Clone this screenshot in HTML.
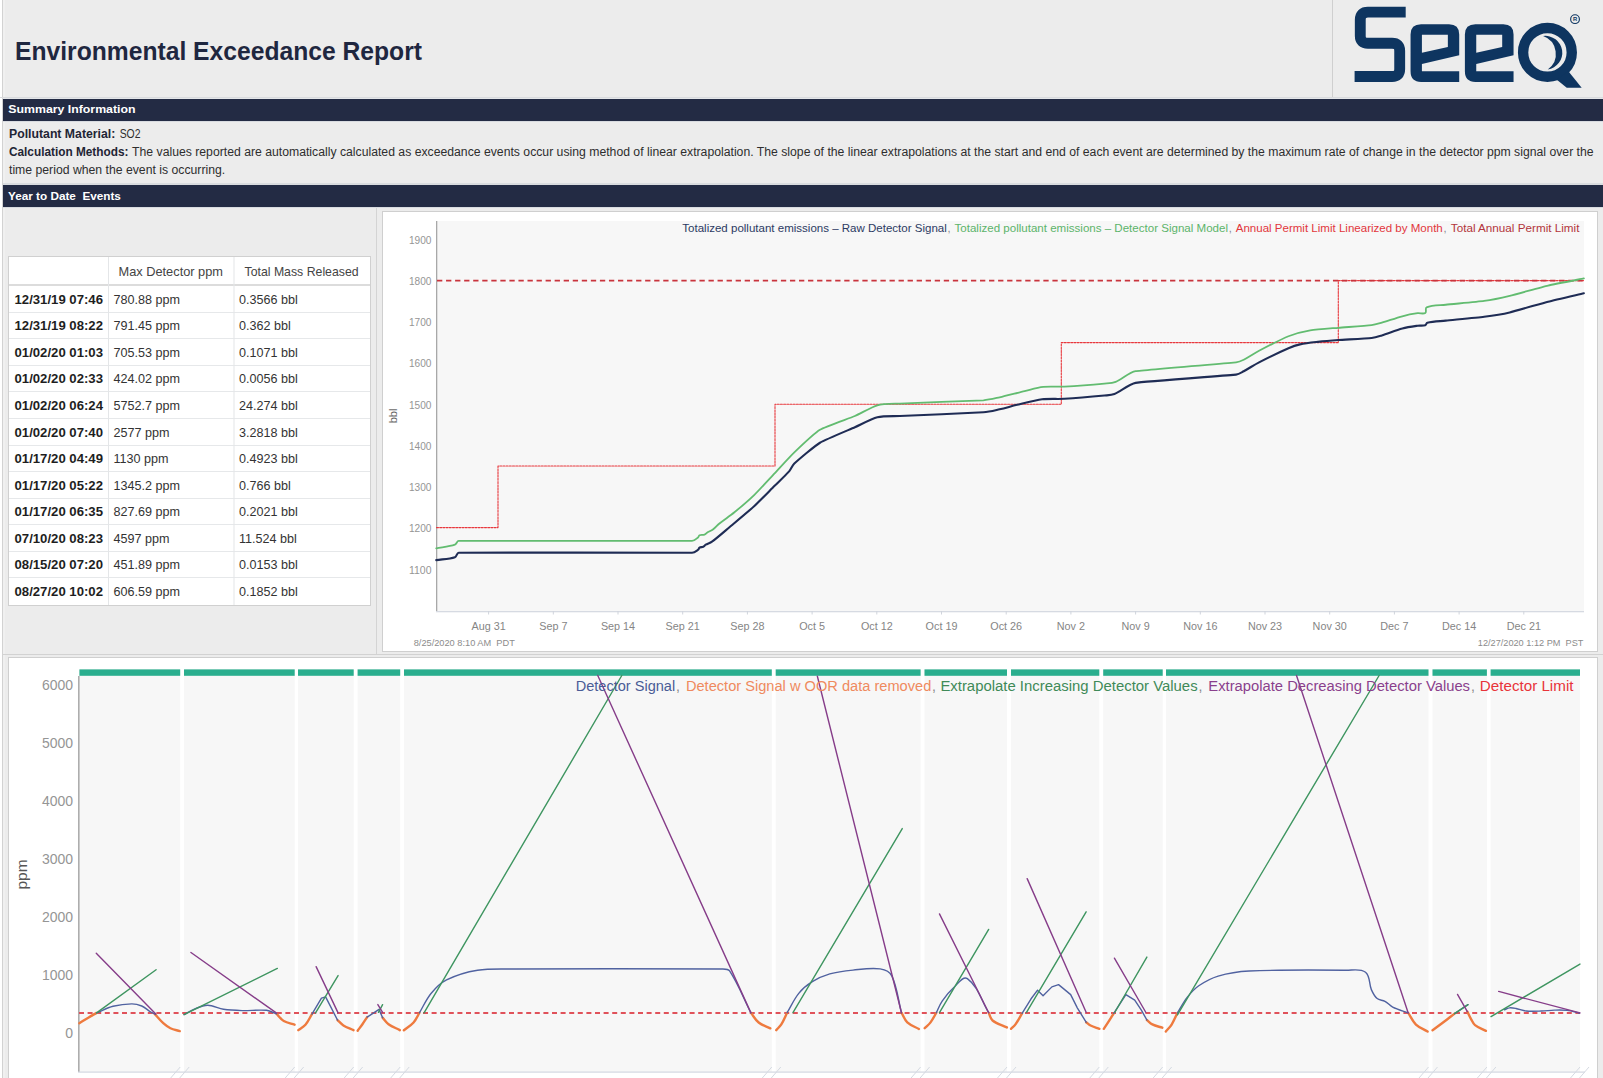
<!DOCTYPE html><html><head><meta charset="utf-8"><style>html,body{margin:0;padding:0;background:#ececec;overflow:hidden;width:1603px;height:1078px}svg{display:block}text{font-family:"Liberation Sans",sans-serif}</style></head><body>
<svg width="1603" height="1078" viewBox="0 0 1603 1078">
<rect x="0" y="0" width="1603" height="1078" fill="#ececec" />
<rect x="0" y="0" width="2" height="1078" fill="#ffffff" />
<rect x="2" y="0" width="1" height="1078" fill="#d2d2d2" />
<rect x="3" y="0" width="2" height="1078" fill="#f0f0f0" />
<rect x="1332" y="0" width="1" height="97" fill="#cfcfcf" />
<rect x="0" y="97" width="1603" height="1" fill="#d9dbde" />
<rect x="3" y="98" width="1600" height="1" fill="#e4e6e9" />
<text x="15.00" y="60.00" font-size="25" fill="#1f2740" font-weight="bold" textLength="407.00" lengthAdjust="spacingAndGlyphs" >Environmental Exceedance Report</text>
<g transform="translate(1340,0) scale(0.162196)" fill="#0e3560">
<path d="M405,75 H172 Q125,75 125,122 V220 Q125,267 172,267 H321 Q368,267 368,314 V425 Q368,472 321,472 H90" fill="none" stroke="#0e3560" stroke-width="67"/>
<path fill-rule="evenodd" d="M500,150 H672 Q735,150 735,213 V340 L505,395 V440 H735 V505 H500 Q435,505 435,440 V213 Q435,150 500,150 Z M505,215 H665 V290 L505,325 Z"/>
<path fill-rule="evenodd" d="M835,150 H1007 Q1070,150 1070,213 V340 L840,395 V440 H1070 V505 H835 Q770,505 770,440 V213 Q770,150 835,150 Z M840,215 H1000 V290 L840,325 Z"/>
<circle cx="1279" cy="323" r="150" fill="none" stroke="#0e3560" stroke-width="64"/>
<path d="M1252,222 A104,104 0 0 1 1281,428 A117,117 0 0 0 1252,222 Z"/>
<path d="M1335,490 L1408,440 L1490,541 L1398,541 Z"/>
<circle cx="1449" cy="118" r="27" fill="none" stroke="#0e3560" stroke-width="7"/>
<text x="1449" y="131" font-size="36" font-weight="bold" text-anchor="middle" fill="#0e3560">R</text>
</g>
<rect x="3" y="99" width="1600" height="22" fill="#232b44" />
<rect x="3" y="121" width="1600" height="1" fill="#d8dbe0" />
<text x="8.30" y="113.40" font-size="11.5" fill="#ffffff" font-weight="bold" textLength="127.20" lengthAdjust="spacingAndGlyphs" >Summary Information</text>
<rect x="3" y="183" width="1600" height="2" fill="#d9dcdf" />
<rect x="3" y="185" width="1600" height="22" fill="#232b44" />
<rect x="3" y="207" width="1600" height="1" fill="#d8dbe0" />
<text x="8.00" y="199.70" font-size="11.5" fill="#ffffff" font-weight="bold" textLength="112.90" lengthAdjust="spacingAndGlyphs" xml:space="preserve">Year to Date  Events</text>
<text x="9.00" y="137.60" font-size="12" fill="#1f2535" font-weight="bold" textLength="106.30" lengthAdjust="spacingAndGlyphs" >Pollutant Material:</text>
<text x="119.70" y="137.60" font-size="12" fill="#2e2e2e" textLength="20.80" lengthAdjust="spacingAndGlyphs" >SO2</text>
<text x="9.00" y="156.30" font-size="12" fill="#1f2535" font-weight="bold" textLength="119.40" lengthAdjust="spacingAndGlyphs" >Calculation Methods:</text>
<text x="132.10" y="156.30" font-size="12" fill="#2e2e2e" textLength="1461.50" lengthAdjust="spacingAndGlyphs" >The values reported are automatically calculated as exceedance events occur using method of linear extrapolation. The slope of the linear extrapolations at the start and end of each event are determined by the maximum rate of change in the detector ppm signal over the</text>
<text x="9.00" y="174.00" font-size="12" fill="#2e2e2e" textLength="216.20" lengthAdjust="spacingAndGlyphs" >time period when the event is occurring.</text>
<rect x="376" y="208" width="1" height="446" fill="#d4d4d4" />
<rect x="9" y="257" width="361" height="348" fill="#ffffff" />
<rect x="8.5" y="256.5" width="362" height="349" fill="none" stroke="#d0d0d0" stroke-width="1"/>
<rect x="9" y="284" width="361" height="2" fill="#dcdcdc" />
<rect x="9" y="312" width="361" height="1" fill="#e6e8ea" />
<rect x="9" y="338" width="361" height="1" fill="#e6e8ea" />
<rect x="9" y="365" width="361" height="1" fill="#e6e8ea" />
<rect x="9" y="391" width="361" height="1" fill="#e6e8ea" />
<rect x="9" y="418" width="361" height="1" fill="#e6e8ea" />
<rect x="9" y="445" width="361" height="1" fill="#e6e8ea" />
<rect x="9" y="471" width="361" height="1" fill="#e6e8ea" />
<rect x="9" y="498" width="361" height="1" fill="#e6e8ea" />
<rect x="9" y="524" width="361" height="1" fill="#e6e8ea" />
<rect x="9" y="551" width="361" height="1" fill="#e6e8ea" />
<rect x="9" y="577" width="361" height="1" fill="#e6e8ea" />
<rect x="108" y="257" width="1" height="348" fill="#e4e6e8" />
<rect x="233.5" y="257" width="1" height="348" fill="#e4e6e8" />
<text x="118.50" y="276.20" font-size="13" fill="#444444" textLength="104.50" lengthAdjust="spacingAndGlyphs" >Max Detector ppm</text>
<text x="244.50" y="276.20" font-size="13" fill="#444444" textLength="114.10" lengthAdjust="spacingAndGlyphs" >Total Mass Released</text>
<text x="14.50" y="303.60" font-size="13" fill="#1e1e1e" font-weight="bold" textLength="88.50" lengthAdjust="spacingAndGlyphs" >12/31/19 07:46</text>
<text x="113.50" y="303.60" font-size="13" fill="#333333" textLength="66.50" lengthAdjust="spacingAndGlyphs" >780.88 ppm</text>
<text x="239.00" y="303.60" font-size="13" fill="#333333" textLength="58.70" lengthAdjust="spacingAndGlyphs" >0.3566 bbl</text>
<text x="14.50" y="330.18" font-size="13" fill="#1e1e1e" font-weight="bold" textLength="88.50" lengthAdjust="spacingAndGlyphs" >12/31/19 08:22</text>
<text x="113.50" y="330.18" font-size="13" fill="#333333" textLength="66.50" lengthAdjust="spacingAndGlyphs" >791.45 ppm</text>
<text x="239.00" y="330.18" font-size="13" fill="#333333" textLength="51.71" lengthAdjust="spacingAndGlyphs" >0.362 bbl</text>
<text x="14.50" y="356.77" font-size="13" fill="#1e1e1e" font-weight="bold" textLength="88.50" lengthAdjust="spacingAndGlyphs" >01/02/20 01:03</text>
<text x="113.50" y="356.77" font-size="13" fill="#333333" textLength="66.50" lengthAdjust="spacingAndGlyphs" >705.53 ppm</text>
<text x="239.00" y="356.77" font-size="13" fill="#333333" textLength="58.70" lengthAdjust="spacingAndGlyphs" >0.1071 bbl</text>
<text x="14.50" y="383.35" font-size="13" fill="#1e1e1e" font-weight="bold" textLength="88.50" lengthAdjust="spacingAndGlyphs" >01/02/20 02:33</text>
<text x="113.50" y="383.35" font-size="13" fill="#333333" textLength="66.50" lengthAdjust="spacingAndGlyphs" >424.02 ppm</text>
<text x="239.00" y="383.35" font-size="13" fill="#333333" textLength="58.70" lengthAdjust="spacingAndGlyphs" >0.0056 bbl</text>
<text x="14.50" y="409.93" font-size="13" fill="#1e1e1e" font-weight="bold" textLength="88.50" lengthAdjust="spacingAndGlyphs" >01/02/20 06:24</text>
<text x="113.50" y="409.93" font-size="13" fill="#333333" textLength="66.50" lengthAdjust="spacingAndGlyphs" >5752.7 ppm</text>
<text x="239.00" y="409.93" font-size="13" fill="#333333" textLength="58.70" lengthAdjust="spacingAndGlyphs" >24.274 bbl</text>
<text x="14.50" y="436.52" font-size="13" fill="#1e1e1e" font-weight="bold" textLength="88.50" lengthAdjust="spacingAndGlyphs" >01/02/20 07:40</text>
<text x="113.50" y="436.52" font-size="13" fill="#333333" textLength="56.00" lengthAdjust="spacingAndGlyphs" >2577 ppm</text>
<text x="239.00" y="436.52" font-size="13" fill="#333333" textLength="58.70" lengthAdjust="spacingAndGlyphs" >3.2818 bbl</text>
<text x="14.50" y="463.10" font-size="13" fill="#1e1e1e" font-weight="bold" textLength="88.50" lengthAdjust="spacingAndGlyphs" >01/17/20 04:49</text>
<text x="113.50" y="463.10" font-size="13" fill="#333333" textLength="55.07" lengthAdjust="spacingAndGlyphs" >1130 ppm</text>
<text x="239.00" y="463.10" font-size="13" fill="#333333" textLength="58.70" lengthAdjust="spacingAndGlyphs" >0.4923 bbl</text>
<text x="14.50" y="489.68" font-size="13" fill="#1e1e1e" font-weight="bold" textLength="88.50" lengthAdjust="spacingAndGlyphs" >01/17/20 05:22</text>
<text x="113.50" y="489.68" font-size="13" fill="#333333" textLength="66.50" lengthAdjust="spacingAndGlyphs" >1345.2 ppm</text>
<text x="239.00" y="489.68" font-size="13" fill="#333333" textLength="51.71" lengthAdjust="spacingAndGlyphs" >0.766 bbl</text>
<text x="14.50" y="516.27" font-size="13" fill="#1e1e1e" font-weight="bold" textLength="88.50" lengthAdjust="spacingAndGlyphs" >01/17/20 06:35</text>
<text x="113.50" y="516.27" font-size="13" fill="#333333" textLength="66.50" lengthAdjust="spacingAndGlyphs" >827.69 ppm</text>
<text x="239.00" y="516.27" font-size="13" fill="#333333" textLength="58.70" lengthAdjust="spacingAndGlyphs" >0.2021 bbl</text>
<text x="14.50" y="542.85" font-size="13" fill="#1e1e1e" font-weight="bold" textLength="88.50" lengthAdjust="spacingAndGlyphs" >07/10/20 08:23</text>
<text x="113.50" y="542.85" font-size="13" fill="#333333" textLength="56.00" lengthAdjust="spacingAndGlyphs" >4597 ppm</text>
<text x="239.00" y="542.85" font-size="13" fill="#333333" textLength="57.77" lengthAdjust="spacingAndGlyphs" >11.524 bbl</text>
<text x="14.50" y="569.43" font-size="13" fill="#1e1e1e" font-weight="bold" textLength="88.50" lengthAdjust="spacingAndGlyphs" >08/15/20 07:20</text>
<text x="113.50" y="569.43" font-size="13" fill="#333333" textLength="66.50" lengthAdjust="spacingAndGlyphs" >451.89 ppm</text>
<text x="239.00" y="569.43" font-size="13" fill="#333333" textLength="58.70" lengthAdjust="spacingAndGlyphs" >0.0153 bbl</text>
<text x="14.50" y="596.02" font-size="13" fill="#1e1e1e" font-weight="bold" textLength="88.50" lengthAdjust="spacingAndGlyphs" >08/27/20 10:02</text>
<text x="113.50" y="596.02" font-size="13" fill="#333333" textLength="66.50" lengthAdjust="spacingAndGlyphs" >606.59 ppm</text>
<text x="239.00" y="596.02" font-size="13" fill="#333333" textLength="58.70" lengthAdjust="spacingAndGlyphs" >0.1852 bbl</text>
<rect x="382.5" y="211.5" width="1215" height="440" fill="#ffffff" stroke="#cfcfcf" stroke-width="1"/>
<rect x="437" y="221" width="1147" height="390" fill="#f7f7f7" />
<rect x="436" y="221" width="1.3" height="391" fill="#a8a8a8" />
<rect x="436" y="611" width="1148" height="1.3" fill="#d6dae2" />
<rect x="488.1" y="611" width="1" height="3.5" fill="#d0d4dc" />
<rect x="552.8000000000001" y="611" width="1" height="3.5" fill="#d0d4dc" />
<rect x="617.5" y="611" width="1" height="3.5" fill="#d0d4dc" />
<rect x="682.2" y="611" width="1" height="3.5" fill="#d0d4dc" />
<rect x="746.9000000000001" y="611" width="1" height="3.5" fill="#d0d4dc" />
<rect x="811.6" y="611" width="1" height="3.5" fill="#d0d4dc" />
<rect x="876.3000000000001" y="611" width="1" height="3.5" fill="#d0d4dc" />
<rect x="941.0" y="611" width="1" height="3.5" fill="#d0d4dc" />
<rect x="1005.7" y="611" width="1" height="3.5" fill="#d0d4dc" />
<rect x="1070.4" y="611" width="1" height="3.5" fill="#d0d4dc" />
<rect x="1135.1" y="611" width="1" height="3.5" fill="#d0d4dc" />
<rect x="1199.8000000000002" y="611" width="1" height="3.5" fill="#d0d4dc" />
<rect x="1264.5" y="611" width="1" height="3.5" fill="#d0d4dc" />
<rect x="1329.2" y="611" width="1" height="3.5" fill="#d0d4dc" />
<rect x="1393.9" y="611" width="1" height="3.5" fill="#d0d4dc" />
<rect x="1458.6" y="611" width="1" height="3.5" fill="#d0d4dc" />
<rect x="1523.3000000000002" y="611" width="1" height="3.5" fill="#d0d4dc" />
<text x="488.60" y="629.60" font-size="11" fill="#858585" text-anchor="middle" textLength="34.20" lengthAdjust="spacingAndGlyphs" >Aug 31</text>
<text x="553.30" y="629.60" font-size="11" fill="#858585" text-anchor="middle" textLength="28.20" lengthAdjust="spacingAndGlyphs" >Sep 7</text>
<text x="618.00" y="629.60" font-size="11" fill="#858585" text-anchor="middle" textLength="34.20" lengthAdjust="spacingAndGlyphs" >Sep 14</text>
<text x="682.70" y="629.60" font-size="11" fill="#858585" text-anchor="middle" textLength="34.20" lengthAdjust="spacingAndGlyphs" >Sep 21</text>
<text x="747.40" y="629.60" font-size="11" fill="#858585" text-anchor="middle" textLength="34.20" lengthAdjust="spacingAndGlyphs" >Sep 28</text>
<text x="812.10" y="629.60" font-size="11" fill="#858585" text-anchor="middle" textLength="25.79" lengthAdjust="spacingAndGlyphs" >Oct 5</text>
<text x="876.80" y="629.60" font-size="11" fill="#858585" text-anchor="middle" textLength="31.79" lengthAdjust="spacingAndGlyphs" >Oct 12</text>
<text x="941.50" y="629.60" font-size="11" fill="#858585" text-anchor="middle" textLength="31.79" lengthAdjust="spacingAndGlyphs" >Oct 19</text>
<text x="1006.20" y="629.60" font-size="11" fill="#858585" text-anchor="middle" textLength="31.79" lengthAdjust="spacingAndGlyphs" >Oct 26</text>
<text x="1070.90" y="629.60" font-size="11" fill="#858585" text-anchor="middle" textLength="28.19" lengthAdjust="spacingAndGlyphs" >Nov 2</text>
<text x="1135.60" y="629.60" font-size="11" fill="#858585" text-anchor="middle" textLength="28.19" lengthAdjust="spacingAndGlyphs" >Nov 9</text>
<text x="1200.30" y="629.60" font-size="11" fill="#858585" text-anchor="middle" textLength="34.19" lengthAdjust="spacingAndGlyphs" >Nov 16</text>
<text x="1265.00" y="629.60" font-size="11" fill="#858585" text-anchor="middle" textLength="34.19" lengthAdjust="spacingAndGlyphs" >Nov 23</text>
<text x="1329.70" y="629.60" font-size="11" fill="#858585" text-anchor="middle" textLength="34.19" lengthAdjust="spacingAndGlyphs" >Nov 30</text>
<text x="1394.40" y="629.60" font-size="11" fill="#858585" text-anchor="middle" textLength="28.19" lengthAdjust="spacingAndGlyphs" >Dec 7</text>
<text x="1459.10" y="629.60" font-size="11" fill="#858585" text-anchor="middle" textLength="34.19" lengthAdjust="spacingAndGlyphs" >Dec 14</text>
<text x="1523.80" y="629.60" font-size="11" fill="#858585" text-anchor="middle" textLength="34.19" lengthAdjust="spacingAndGlyphs" >Dec 21</text>
<text x="431.50" y="243.70" font-size="10" fill="#959595" text-anchor="end" textLength="22.50" lengthAdjust="spacingAndGlyphs" >1900</text>
<text x="431.50" y="284.95" font-size="10" fill="#959595" text-anchor="end" textLength="22.50" lengthAdjust="spacingAndGlyphs" >1800</text>
<text x="431.50" y="326.20" font-size="10" fill="#959595" text-anchor="end" textLength="22.50" lengthAdjust="spacingAndGlyphs" >1700</text>
<text x="431.50" y="367.45" font-size="10" fill="#959595" text-anchor="end" textLength="22.50" lengthAdjust="spacingAndGlyphs" >1600</text>
<text x="431.50" y="408.70" font-size="10" fill="#959595" text-anchor="end" textLength="22.50" lengthAdjust="spacingAndGlyphs" >1500</text>
<text x="431.50" y="449.95" font-size="10" fill="#959595" text-anchor="end" textLength="22.50" lengthAdjust="spacingAndGlyphs" >1400</text>
<text x="431.50" y="491.20" font-size="10" fill="#959595" text-anchor="end" textLength="22.50" lengthAdjust="spacingAndGlyphs" >1300</text>
<text x="431.50" y="532.45" font-size="10" fill="#959595" text-anchor="end" textLength="22.50" lengthAdjust="spacingAndGlyphs" >1200</text>
<text x="431.50" y="573.70" font-size="10" fill="#959595" text-anchor="end" textLength="22.50" lengthAdjust="spacingAndGlyphs" >1100</text>
<text x="0" y="0" font-size="11" fill="#666" transform="translate(397,416) rotate(-90)" text-anchor="middle">bbl</text>
<text x="413.70" y="645.50" font-size="9.5" fill="#8c8c8c" textLength="101.10" lengthAdjust="spacingAndGlyphs" xml:space="preserve">8/25/2020 8:10 AM  PDT</text>
<text x="1477.80" y="645.50" font-size="9.5" fill="#8c8c8c" textLength="105.60" lengthAdjust="spacingAndGlyphs" xml:space="preserve">12/27/2020 1:12 PM  PST</text>
<text x="682.30" y="232.20" font-size="11" fill="#2c3a63" textLength="264.50" lengthAdjust="spacingAndGlyphs" >Totalized pollutant emissions – Raw Detector Signal</text>
<text x="947.50" y="232.20" font-size="11" fill="#888888" >,</text>
<text x="954.50" y="232.20" font-size="11" fill="#5cb46a" textLength="273.50" lengthAdjust="spacingAndGlyphs" >Totalized pollutant emissions – Detector Signal Model</text>
<text x="1228.80" y="232.20" font-size="11" fill="#888888" >,</text>
<text x="1235.70" y="232.20" font-size="11" fill="#e2363c" textLength="207.10" lengthAdjust="spacingAndGlyphs" >Annual Permit Limit Linearized by Month</text>
<text x="1443.50" y="232.20" font-size="11" fill="#888888" >,</text>
<text x="1450.80" y="232.20" font-size="11" fill="#b3353b" textLength="128.60" lengthAdjust="spacingAndGlyphs" >Total Annual Permit Limit</text>
<path d="M436.50,527.60 L498.00,527.60 L498.00,466.00 L775.00,466.00 L775.00,404.30 L1061.30,404.30 L1061.30,342.60 L1338.30,342.60 L1338.30,280.60 L1584.00,280.60" fill="none" stroke="#e8383d" stroke-width="1.1" stroke-linejoin="round" stroke-linecap="round" stroke-dasharray="2,1.2" stroke-linecap="butt" stroke-linejoin="miter"/>
<line x1="437" y1="280.6" x2="1584" y2="280.6" stroke="#c9343d" stroke-width="1.8" stroke-dasharray="5.3,3.75"/>
<path d="M436.24,548.43 C442.12,547.26 449.26,546.59 454.95,544.69 C456.63,544.13 456.93,540.98 458.70,540.95 C464.70,540.85 686.01,541.04 692.01,540.95 C694.43,540.91 696.32,538.68 698.25,537.21 C698.87,536.73 698.77,535.50 699.49,535.21 C701.05,534.59 702.90,535.24 704.49,534.71 C705.50,534.37 706.08,533.28 706.98,532.71 C709.00,531.45 711.30,530.64 713.22,529.22 C715.49,527.54 717.25,525.25 719.46,523.48 C724.14,519.73 729.79,516.06 734.43,512.25 C739.07,508.44 750.08,498.96 754.39,494.78 C758.70,490.61 770.24,477.94 774.35,473.57 C778.47,469.21 789.99,456.52 794.32,452.36 C798.64,448.21 814.82,432.84 819.96,429.76 C825.11,426.67 849.38,418.38 854.90,416.03 C860.42,413.68 871.57,406.91 877.35,405.30 C883.14,403.70 893.82,403.84 899.81,403.56 C905.81,403.27 977.42,400.69 983.41,400.31 C988.89,399.97 994.26,398.52 999.63,397.32 C1005.48,396.00 1018.74,392.48 1024.58,391.08 C1030.41,389.68 1037.33,387.51 1043.29,386.84 C1049.26,386.17 1058.51,386.91 1064.50,386.59 C1070.50,386.27 1098.45,384.15 1104.43,383.59 C1108.20,383.24 1112.14,383.25 1115.66,381.85 C1121.23,379.62 1129.70,372.08 1135.62,371.12 C1141.54,370.16 1230.07,362.94 1236.04,362.31 C1238.72,362.03 1241.30,360.96 1243.71,359.75 C1249.01,357.10 1253.82,353.55 1259.06,350.80 C1264.37,348.01 1282.90,338.45 1288.47,336.22 C1294.04,333.99 1304.30,331.34 1310.21,330.34 C1316.13,329.34 1332.37,328.28 1338.35,327.78 C1344.33,327.28 1365.64,325.92 1371.60,325.22 C1375.09,324.81 1378.45,323.65 1381.83,322.66 C1387.59,320.98 1396.49,317.80 1402.29,316.27 C1407.33,314.94 1412.47,313.95 1417.64,313.20 C1420.17,312.83 1423.17,314.35 1425.31,312.94 C1426.92,311.89 1424.80,308.03 1426.59,307.32 C1432.16,305.09 1439.81,305.42 1445.77,304.76 C1451.73,304.10 1478.19,301.76 1484.14,300.92 C1490.08,300.09 1503.88,297.21 1509.71,295.81 C1515.55,294.41 1542.24,286.95 1548.08,285.58 C1553.92,284.21 1578.00,279.59 1583.89,278.42" fill="none" stroke="#62bc70" stroke-width="1.8" stroke-linejoin="round" stroke-linecap="round" />
<path d="M436.24,560.16 C442.16,559.21 449.26,559.07 454.95,557.17 C456.80,556.55 456.75,552.71 458.70,552.68 C464.70,552.56 686.01,552.75 692.01,552.68 C694.32,552.65 696.33,550.96 698.25,549.68 C698.90,549.25 698.82,548.09 699.49,547.69 C700.60,547.02 702.07,547.25 703.24,546.69 C704.20,546.23 704.81,545.22 705.73,544.69 C707.74,543.55 710.11,543.07 711.97,541.70 C716.80,538.14 724.85,531.09 729.44,527.22 C734.03,523.36 749.97,510.07 754.39,506.01 C758.81,501.96 770.11,490.29 774.35,486.05 C778.60,481.81 785.34,475.56 789.33,471.08 C791.32,468.84 792.12,465.63 794.32,463.59 C798.72,459.52 814.82,445.82 819.96,442.73 C825.11,439.65 849.41,429.69 854.90,427.26 C860.38,424.83 871.53,418.74 877.35,417.28 C883.18,415.82 893.82,416.31 899.81,416.03 C905.81,415.75 977.42,412.69 983.41,412.29 C988.89,411.92 994.26,410.49 999.63,409.30 C1005.48,407.99 1011.25,406.18 1017.09,404.80 C1022.93,403.43 1036.09,400.07 1042.05,399.31 C1048.00,398.56 1058.51,399.17 1064.50,398.81 C1070.49,398.46 1098.46,396.14 1104.43,395.57 C1107.78,395.25 1111.30,395.34 1114.41,394.07 C1119.97,391.81 1129.70,383.79 1135.62,382.84 C1141.55,381.90 1230.07,375.22 1236.04,374.59 C1238.81,374.29 1241.25,372.57 1243.71,371.26 C1248.94,368.47 1253.79,365.02 1259.06,362.31 C1264.39,359.56 1282.97,350.65 1288.47,348.24 C1292.18,346.62 1296.03,345.26 1299.98,344.40 C1305.84,343.13 1311.92,342.52 1317.89,341.85 C1323.85,341.17 1332.36,340.48 1338.35,340.06 C1344.33,339.63 1365.63,338.64 1371.60,338.01 C1375.09,337.64 1378.47,336.49 1381.83,335.45 C1387.56,333.68 1396.50,330.12 1402.29,328.55 C1407.31,327.18 1412.49,326.48 1417.64,325.73 C1420.17,325.37 1422.86,325.99 1425.31,325.22 C1426.35,324.89 1426.29,322.90 1427.35,322.66 C1433.21,321.35 1439.80,321.24 1445.77,320.62 C1451.74,320.00 1478.18,317.54 1484.14,316.78 C1490.09,316.02 1503.87,313.81 1509.71,312.43 C1515.55,311.05 1542.27,303.19 1548.08,301.69 C1553.89,300.19 1578.05,294.63 1583.89,293.25" fill="none" stroke="#1f2c55" stroke-width="2.1" stroke-linejoin="round" stroke-linecap="round" />
<rect x="3" y="654" width="1600" height="1" fill="#d2d2d2" />
<rect x="8.5" y="657.5" width="1589" height="440" fill="#ffffff" stroke="#cfcfcf" stroke-width="1"/>
<rect x="79.40" y="669" width="100.80" height="403" fill="#f7f7f7" />
<rect x="184.00" y="669" width="110.70" height="403" fill="#f7f7f7" />
<rect x="298.00" y="669" width="55.70" height="403" fill="#f7f7f7" />
<rect x="357.60" y="669" width="42.60" height="403" fill="#f7f7f7" />
<rect x="404.00" y="669" width="367.80" height="403" fill="#f7f7f7" />
<rect x="775.70" y="669" width="144.90" height="403" fill="#f7f7f7" />
<rect x="924.50" y="669" width="82.50" height="403" fill="#f7f7f7" />
<rect x="1011.00" y="669" width="88.30" height="403" fill="#f7f7f7" />
<rect x="1103.20" y="669" width="59.50" height="403" fill="#f7f7f7" />
<rect x="1166.00" y="669" width="262.50" height="403" fill="#f7f7f7" />
<rect x="1432.50" y="669" width="54.40" height="403" fill="#f7f7f7" />
<rect x="1490.60" y="669" width="89.40" height="403" fill="#f7f7f7" />
<rect x="79.40" y="669.4" width="100.80" height="6.4" fill="#2aae8e" />
<rect x="184.00" y="669.4" width="110.70" height="6.4" fill="#2aae8e" />
<rect x="298.00" y="669.4" width="55.70" height="6.4" fill="#2aae8e" />
<rect x="357.60" y="669.4" width="42.60" height="6.4" fill="#2aae8e" />
<rect x="404.00" y="669.4" width="367.80" height="6.4" fill="#2aae8e" />
<rect x="775.70" y="669.4" width="144.90" height="6.4" fill="#2aae8e" />
<rect x="924.50" y="669.4" width="82.50" height="6.4" fill="#2aae8e" />
<rect x="1011.00" y="669.4" width="88.30" height="6.4" fill="#2aae8e" />
<rect x="1103.20" y="669.4" width="59.50" height="6.4" fill="#2aae8e" />
<rect x="1166.00" y="669.4" width="262.50" height="6.4" fill="#2aae8e" />
<rect x="1432.50" y="669.4" width="54.40" height="6.4" fill="#2aae8e" />
<rect x="1490.60" y="669.4" width="89.40" height="6.4" fill="#2aae8e" />
<rect x="78.2" y="676" width="1.3" height="396" fill="#9a9a9a" />
<rect x="78" y="1071.5" width="1507" height="1.2" fill="#d3d8e2" />
<text x="73.00" y="689.50" font-size="14.3" fill="#959595" text-anchor="end" textLength="31.10" lengthAdjust="spacingAndGlyphs" >6000</text>
<text x="73.00" y="747.57" font-size="14.3" fill="#959595" text-anchor="end" textLength="31.10" lengthAdjust="spacingAndGlyphs" >5000</text>
<text x="73.00" y="805.64" font-size="14.3" fill="#959595" text-anchor="end" textLength="31.10" lengthAdjust="spacingAndGlyphs" >4000</text>
<text x="73.00" y="863.71" font-size="14.3" fill="#959595" text-anchor="end" textLength="31.10" lengthAdjust="spacingAndGlyphs" >3000</text>
<text x="73.00" y="921.78" font-size="14.3" fill="#959595" text-anchor="end" textLength="31.10" lengthAdjust="spacingAndGlyphs" >2000</text>
<text x="73.00" y="979.85" font-size="14.3" fill="#959595" text-anchor="end" textLength="31.10" lengthAdjust="spacingAndGlyphs" >1000</text>
<text x="73.00" y="1037.92" font-size="14.3" fill="#959595" text-anchor="end" textLength="7.78" lengthAdjust="spacingAndGlyphs" >0</text>
<text x="0" y="0" font-size="14" fill="#555" transform="translate(27,874.5) rotate(-90)" text-anchor="middle" textLength="30" lengthAdjust="spacingAndGlyphs">ppm</text>
<line x1="79" y1="1013.0" x2="1580" y2="1013.0" stroke="#e0525a" stroke-width="1.8" stroke-dasharray="5,3.6"/>
<line x1="170.7" y1="1078" x2="180.2" y2="1067" stroke="#d5dae2" stroke-width="1"/>
<line x1="179.7" y1="1078" x2="189.2" y2="1067" stroke="#d5dae2" stroke-width="1"/>
<line x1="285.2" y1="1078" x2="294.7" y2="1067" stroke="#d5dae2" stroke-width="1"/>
<line x1="294.2" y1="1078" x2="303.7" y2="1067" stroke="#d5dae2" stroke-width="1"/>
<line x1="344.2" y1="1078" x2="353.7" y2="1067" stroke="#d5dae2" stroke-width="1"/>
<line x1="353.2" y1="1078" x2="362.7" y2="1067" stroke="#d5dae2" stroke-width="1"/>
<line x1="390.7" y1="1078" x2="400.2" y2="1067" stroke="#d5dae2" stroke-width="1"/>
<line x1="399.7" y1="1078" x2="409.2" y2="1067" stroke="#d5dae2" stroke-width="1"/>
<line x1="762.3" y1="1078" x2="771.8" y2="1067" stroke="#d5dae2" stroke-width="1"/>
<line x1="771.3" y1="1078" x2="780.8" y2="1067" stroke="#d5dae2" stroke-width="1"/>
<line x1="911.1" y1="1078" x2="920.6" y2="1067" stroke="#d5dae2" stroke-width="1"/>
<line x1="920.1" y1="1078" x2="929.6" y2="1067" stroke="#d5dae2" stroke-width="1"/>
<line x1="997.5" y1="1078" x2="1007.0" y2="1067" stroke="#d5dae2" stroke-width="1"/>
<line x1="1006.5" y1="1078" x2="1016.0" y2="1067" stroke="#d5dae2" stroke-width="1"/>
<line x1="1089.8" y1="1078" x2="1099.3" y2="1067" stroke="#d5dae2" stroke-width="1"/>
<line x1="1098.8" y1="1078" x2="1108.3" y2="1067" stroke="#d5dae2" stroke-width="1"/>
<line x1="1153.2" y1="1078" x2="1162.7" y2="1067" stroke="#d5dae2" stroke-width="1"/>
<line x1="1162.2" y1="1078" x2="1171.7" y2="1067" stroke="#d5dae2" stroke-width="1"/>
<line x1="1419.0" y1="1078" x2="1428.5" y2="1067" stroke="#d5dae2" stroke-width="1"/>
<line x1="1428.0" y1="1078" x2="1437.5" y2="1067" stroke="#d5dae2" stroke-width="1"/>
<line x1="1477.4" y1="1078" x2="1486.9" y2="1067" stroke="#d5dae2" stroke-width="1"/>
<line x1="1486.4" y1="1078" x2="1495.9" y2="1067" stroke="#d5dae2" stroke-width="1"/>
<line x1="1570.5" y1="1078" x2="1580.0" y2="1067" stroke="#d5dae2" stroke-width="1"/>
<line x1="1579.5" y1="1078" x2="1589.0" y2="1067" stroke="#d5dae2" stroke-width="1"/>
<path d="M79.33,1023.22 C82.44,1021.31 85.52,1019.36 88.65,1017.48 C91.26,1015.91 93.91,1014.42 96.54,1012.89" fill="none" stroke="#ee7a3e" stroke-width="2.4" stroke-linejoin="round" stroke-linecap="round" />
<path d="M154.65,1013.89 C157.52,1017.00 160.13,1020.37 163.26,1023.22 C165.42,1025.18 167.80,1026.98 170.44,1028.24 C173.37,1029.64 176.65,1030.15 179.76,1031.11" fill="none" stroke="#ee7a3e" stroke-width="2.4" stroke-linejoin="round" stroke-linecap="round" />
<path d="M96.54,1012.89 C102.04,1010.69 107.31,1007.76 113.04,1006.29 C119.12,1004.73 125.43,1003.91 131.70,1003.85 C135.12,1003.81 138.59,1004.67 141.74,1006.00 C144.92,1007.35 147.41,1009.94 150.35,1011.74 C151.96,1012.72 153.70,1013.46 155.37,1014.32" fill="none" stroke="#5062a0" stroke-width="1.4" stroke-linejoin="round" stroke-linecap="round" />
<path d="M96.54,1012.89 L156.09,969.70" fill="none" stroke="#3e9560" stroke-width="1.4" stroke-linejoin="round" stroke-linecap="round" />
<path d="M96.26,953.34 L155.80,1013.89" fill="none" stroke="#863d89" stroke-width="1.4" stroke-linejoin="round" stroke-linecap="round" />
<path d="M276.61,1013.89 C279.00,1016.28 280.89,1019.33 283.79,1021.07 C287.03,1023.01 290.96,1023.46 294.55,1024.65" fill="none" stroke="#ee7a3e" stroke-width="2.4" stroke-linejoin="round" stroke-linecap="round" />
<path d="M184.07,1014.61 C187.65,1012.70 191.05,1010.36 194.83,1008.87 C198.98,1007.23 203.27,1005.22 207.74,1005.28 C213.17,1005.37 218.16,1008.47 223.52,1009.30 C229.68,1010.25 235.95,1010.45 242.18,1010.59 C250.31,1010.78 258.47,1009.53 266.57,1010.31 C270.11,1010.64 273.26,1012.70 276.61,1013.89" fill="none" stroke="#5062a0" stroke-width="1.4" stroke-linejoin="round" stroke-linecap="round" />
<path d="M184.07,1014.61 L277.33,968.41" fill="none" stroke="#3e9560" stroke-width="1.4" stroke-linejoin="round" stroke-linecap="round" />
<path d="M190.95,952.48 L276.61,1013.18" fill="none" stroke="#863d89" stroke-width="1.4" stroke-linejoin="round" stroke-linecap="round" />
<path d="M298.31,1030.14 C300.68,1028.36 303.51,1027.05 305.43,1024.79 C308.14,1021.62 309.79,1017.67 311.96,1014.11" fill="none" stroke="#ee7a3e" stroke-width="2.4" stroke-linejoin="round" stroke-linecap="round" />
<path d="M337.49,1020.05 C339.47,1021.83 341.17,1023.97 343.42,1025.39 C346.57,1027.37 350.15,1028.55 353.52,1030.14" fill="none" stroke="#ee7a3e" stroke-width="2.4" stroke-linejoin="round" stroke-linecap="round" />
<path d="M311.96,1014.11 L321.46,998.08 L325.62,996.89 L337.49,1020.05" fill="none" stroke="#5062a0" stroke-width="1.4" stroke-linejoin="round" stroke-linecap="round" />
<path d="M315.53,1012.92 L338.08,975.53" fill="none" stroke="#3e9560" stroke-width="1.4" stroke-linejoin="round" stroke-linecap="round" />
<path d="M316.12,966.62 L338.08,1012.92" fill="none" stroke="#863d89" stroke-width="1.4" stroke-linejoin="round" stroke-linecap="round" />
<path d="M357.67,1030.73 C359.25,1028.55 360.88,1026.41 362.42,1024.20 C364.05,1021.86 365.59,1019.45 367.17,1017.08" fill="none" stroke="#ee7a3e" stroke-width="2.4" stroke-linejoin="round" stroke-linecap="round" />
<path d="M382.60,1017.67 C384.58,1019.85 386.16,1022.48 388.54,1024.20 C391.98,1026.69 396.06,1028.16 399.82,1030.14" fill="none" stroke="#ee7a3e" stroke-width="2.4" stroke-linejoin="round" stroke-linecap="round" />
<path d="M367.17,1017.08 L379.04,1009.36 L382.60,1017.67" fill="none" stroke="#5062a0" stroke-width="1.4" stroke-linejoin="round" stroke-linecap="round" />
<path d="M378.45,1012.33 L382.60,1004.61" fill="none" stroke="#3e9560" stroke-width="1.4" stroke-linejoin="round" stroke-linecap="round" />
<path d="M377.85,1004.61 L382.60,1012.33" fill="none" stroke="#863d89" stroke-width="1.4" stroke-linejoin="round" stroke-linecap="round" />
<path d="M403.88,1030.31 C407.11,1027.72 410.82,1025.64 413.57,1022.55 C416.07,1019.73 417.45,1016.09 419.39,1012.86" fill="none" stroke="#ee7a3e" stroke-width="2.4" stroke-linejoin="round" stroke-linecap="round" />
<path d="M750.92,1012.86 C753.50,1016.09 755.44,1019.97 758.67,1022.55 C762.06,1025.26 766.43,1026.43 770.31,1028.37" fill="none" stroke="#ee7a3e" stroke-width="2.4" stroke-linejoin="round" stroke-linecap="round" />
<path d="M419.39,1012.86 C423.27,1006.39 426.23,999.29 431.02,993.47 C435.39,988.17 440.39,982.97 446.53,979.90 C456.22,975.05 466.85,971.87 477.55,970.20 C490.33,968.22 503.40,969.10 516.33,969.04 C584.83,968.71 653.34,968.42 721.84,969.04 C724.50,969.07 728.12,968.76 729.59,970.98 C738.25,984.03 743.81,998.90 750.92,1012.86" fill="none" stroke="#5062a0" stroke-width="1.4" stroke-linejoin="round" stroke-linecap="round" />
<path d="M424.04,1012.86 L621.80,675.51" fill="none" stroke="#3e9560" stroke-width="1.4" stroke-linejoin="round" stroke-linecap="round" />
<path d="M597.76,675.51 L750.92,1012.86" fill="none" stroke="#863d89" stroke-width="1.4" stroke-linejoin="round" stroke-linecap="round" />
<path d="M776.28,1030.16 C777.96,1028.22 779.96,1026.52 781.32,1024.34 C783.61,1020.66 785.19,1016.59 787.13,1012.71" fill="none" stroke="#ee7a3e" stroke-width="2.4" stroke-linejoin="round" stroke-linecap="round" />
<path d="M901.47,1012.71 C903.41,1015.94 904.53,1019.83 907.29,1022.40 C910.54,1025.44 915.04,1026.80 918.91,1028.99" fill="none" stroke="#ee7a3e" stroke-width="2.4" stroke-linejoin="round" stroke-linecap="round" />
<path d="M787.13,1012.71 C791.01,1006.25 794.01,999.18 798.76,993.33 C802.52,988.71 807.28,984.86 812.33,981.71 C817.72,978.33 823.65,975.70 829.77,973.95 C837.32,971.79 845.20,970.86 853.02,970.08 C862.03,969.18 871.20,967.57 880.16,968.91 C884.63,969.59 889.80,971.83 891.78,975.89 C897.34,987.30 898.24,1000.44 901.47,1012.71" fill="none" stroke="#5062a0" stroke-width="1.4" stroke-linejoin="round" stroke-linecap="round" />
<path d="M792.95,1012.71 L902.25,828.60" fill="none" stroke="#3e9560" stroke-width="1.4" stroke-linejoin="round" stroke-linecap="round" />
<path d="M817.36,676.28 L901.47,1012.71" fill="none" stroke="#863d89" stroke-width="1.4" stroke-linejoin="round" stroke-linecap="round" />
<path d="M924.73,1028.22 C926.67,1026.28 928.90,1024.60 930.54,1022.40 C932.80,1019.39 934.42,1015.94 936.36,1012.71" fill="none" stroke="#ee7a3e" stroke-width="2.4" stroke-linejoin="round" stroke-linecap="round" />
<path d="M988.68,1012.71 C989.97,1015.30 990.31,1018.65 992.56,1020.47 C996.69,1023.81 1002.12,1025.12 1006.90,1027.44" fill="none" stroke="#ee7a3e" stroke-width="2.4" stroke-linejoin="round" stroke-linecap="round" />
<path d="M936.36,1012.71 C938.29,1008.84 939.70,1004.65 942.17,1001.09 C945.56,996.19 949.35,991.48 953.80,987.52 C957.84,983.92 962.98,975.44 967.36,978.60 C978.23,986.45 981.58,1001.34 988.68,1012.71" fill="none" stroke="#5062a0" stroke-width="1.4" stroke-linejoin="round" stroke-linecap="round" />
<path d="M939.46,1012.71 L988.68,929.38" fill="none" stroke="#3e9560" stroke-width="1.4" stroke-linejoin="round" stroke-linecap="round" />
<path d="M939.46,913.88 L988.68,1012.71" fill="none" stroke="#863d89" stroke-width="1.4" stroke-linejoin="round" stroke-linecap="round" />
<path d="M1011.04,1028.83 C1012.52,1027.36 1014.25,1026.11 1015.46,1024.42 C1017.96,1020.92 1019.88,1017.06 1022.09,1013.37" fill="none" stroke="#ee7a3e" stroke-width="2.4" stroke-linejoin="round" stroke-linecap="round" />
<path d="M1086.13,1022.21 C1087.61,1023.31 1088.91,1024.70 1090.55,1025.52 C1093.37,1026.93 1096.44,1027.73 1099.39,1028.83" fill="none" stroke="#ee7a3e" stroke-width="2.4" stroke-linejoin="round" stroke-linecap="round" />
<path d="M1022.09,1013.37 L1030.92,999.02 L1037.55,990.18 L1043.07,995.71 L1051.90,986.87 L1058.53,984.66 L1064.05,989.08 L1070.67,994.60 L1077.30,1007.85 L1086.13,1022.21" fill="none" stroke="#5062a0" stroke-width="1.4" stroke-linejoin="round" stroke-linecap="round" />
<path d="M1026.50,1012.27 L1086.13,911.78" fill="none" stroke="#3e9560" stroke-width="1.4" stroke-linejoin="round" stroke-linecap="round" />
<path d="M1027.17,878.65 L1086.13,1012.27" fill="none" stroke="#863d89" stroke-width="1.4" stroke-linejoin="round" stroke-linecap="round" />
<path d="M1103.80,1028.83 C1105.28,1026.63 1106.79,1024.44 1108.22,1022.21 C1110.10,1019.29 1111.90,1016.32 1113.74,1013.37" fill="none" stroke="#ee7a3e" stroke-width="2.4" stroke-linejoin="round" stroke-linecap="round" />
<path d="M1146.87,1020.00 C1148.71,1021.47 1150.28,1023.36 1152.39,1024.42 C1155.52,1025.98 1159.02,1026.63 1162.33,1027.73" fill="none" stroke="#ee7a3e" stroke-width="2.4" stroke-linejoin="round" stroke-linecap="round" />
<path d="M1113.74,1013.37 L1125.89,994.60 L1134.72,1000.12 L1141.35,1010.06 L1146.87,1020.00" fill="none" stroke="#5062a0" stroke-width="1.4" stroke-linejoin="round" stroke-linecap="round" />
<path d="M1114.85,1012.27 L1146.87,957.06" fill="none" stroke="#3e9560" stroke-width="1.4" stroke-linejoin="round" stroke-linecap="round" />
<path d="M1114.40,958.16 L1145.77,1012.27" fill="none" stroke="#863d89" stroke-width="1.4" stroke-linejoin="round" stroke-linecap="round" />
<path d="M1165.82,1031.52 C1167.76,1029.20 1170.03,1027.11 1171.63,1024.54 C1173.93,1020.87 1175.51,1016.79 1177.45,1012.91" fill="none" stroke="#ee7a3e" stroke-width="2.4" stroke-linejoin="round" stroke-linecap="round" />
<path d="M1408.20,1012.91 C1410.78,1016.79 1412.59,1021.32 1415.96,1024.54 C1419.22,1027.67 1423.71,1029.20 1427.59,1031.52" fill="none" stroke="#ee7a3e" stroke-width="2.4" stroke-linejoin="round" stroke-linecap="round" />
<path d="M1177.45,1012.91 C1180.68,1007.74 1183.38,1002.19 1187.15,997.40 C1190.54,993.08 1194.26,988.87 1198.78,985.76 C1204.74,981.67 1211.24,978.09 1218.17,976.07 C1228.23,973.13 1238.73,971.50 1249.20,971.02 C1281.48,969.56 1313.83,969.93 1346.15,970.25 C1352.65,970.31 1360.39,968.23 1365.54,972.19 C1370.40,975.93 1368.88,984.03 1371.36,989.64 C1372.79,992.89 1374.48,996.25 1377.17,998.56 C1379.25,1000.34 1382.53,999.95 1384.93,1001.27 C1387.76,1002.83 1389.80,1005.65 1392.69,1007.09 C1397.63,1009.56 1403.03,1010.97 1408.20,1012.91" fill="none" stroke="#5062a0" stroke-width="1.4" stroke-linejoin="round" stroke-linecap="round" />
<path d="M1177.45,1014.85 L1379.11,675.51" fill="none" stroke="#3e9560" stroke-width="1.4" stroke-linejoin="round" stroke-linecap="round" />
<path d="M1296.51,675.51 L1408.20,1012.91" fill="none" stroke="#863d89" stroke-width="1.4" stroke-linejoin="round" stroke-linecap="round" />
<path d="M1432.54,1030.22 C1436.04,1027.66 1439.58,1025.16 1443.03,1022.54 C1446.92,1019.61 1450.71,1016.57 1454.55,1013.58" fill="none" stroke="#ee7a3e" stroke-width="2.4" stroke-linejoin="round" stroke-linecap="round" />
<path d="M1467.35,1011.66 C1468.63,1014.22 1469.77,1016.86 1471.19,1019.34 C1472.33,1021.35 1473.21,1023.68 1475.03,1025.10 C1478.26,1027.63 1482.28,1028.94 1485.91,1030.86" fill="none" stroke="#ee7a3e" stroke-width="2.4" stroke-linejoin="round" stroke-linecap="round" />
<path d="M1454.55,1013.58 L1467.99,1004.63" fill="none" stroke="#5062a0" stroke-width="1.4" stroke-linejoin="round" stroke-linecap="round" />
<path d="M1454.55,1013.58 L1467.99,1004.63" fill="none" stroke="#3e9560" stroke-width="1.4" stroke-linejoin="round" stroke-linecap="round" />
<path d="M1457.50,994.39 L1467.35,1011.66" fill="none" stroke="#863d89" stroke-width="1.4" stroke-linejoin="round" stroke-linecap="round" />
<path d="M1504.46,1009.74 C1506.17,1009.10 1507.77,1008.03 1509.58,1007.83 C1511.71,1007.59 1513.87,1008.06 1515.98,1008.47 C1519.43,1009.13 1522.72,1010.67 1526.22,1011.02 C1531.31,1011.53 1536.46,1011.19 1541.57,1011.02 C1545.85,1010.89 1550.10,1010.24 1554.37,1010.13 C1558.64,1010.02 1562.93,1009.86 1567.17,1010.38 C1571.30,1010.89 1575.27,1012.26 1579.33,1013.20" fill="none" stroke="#5062a0" stroke-width="1.4" stroke-linejoin="round" stroke-linecap="round" />
<path d="M1491.02,1016.53 L1579.97,964.06" fill="none" stroke="#3e9560" stroke-width="1.4" stroke-linejoin="round" stroke-linecap="round" />
<path d="M1498.70,991.44 L1579.97,1012.94" fill="none" stroke="#863d89" stroke-width="1.4" stroke-linejoin="round" stroke-linecap="round" />
<text x="575.70" y="691.00" font-size="14" fill="#4a5c96" textLength="99.50" lengthAdjust="spacingAndGlyphs" >Detector Signal</text>
<text x="676.00" y="691.00" font-size="14" fill="#888" >,</text>
<text x="685.90" y="691.00" font-size="14" fill="#ef8a5e" textLength="245.40" lengthAdjust="spacingAndGlyphs" >Detector Signal w OOR data removed</text>
<text x="932.00" y="691.00" font-size="14" fill="#888" >,</text>
<text x="940.40" y="691.00" font-size="14" fill="#3f8a58" textLength="257.20" lengthAdjust="spacingAndGlyphs" >Extrapolate Increasing Detector Values</text>
<text x="1198.50" y="691.00" font-size="14" fill="#888" >,</text>
<text x="1208.30" y="691.00" font-size="14" fill="#8a3f8c" textLength="261.70" lengthAdjust="spacingAndGlyphs" >Extrapolate Decreasing Detector Values</text>
<text x="1471.00" y="691.00" font-size="14" fill="#888" >,</text>
<text x="1479.80" y="691.00" font-size="14" fill="#e8343a" textLength="93.70" lengthAdjust="spacingAndGlyphs" >Detector Limit</text>
</svg></body></html>
